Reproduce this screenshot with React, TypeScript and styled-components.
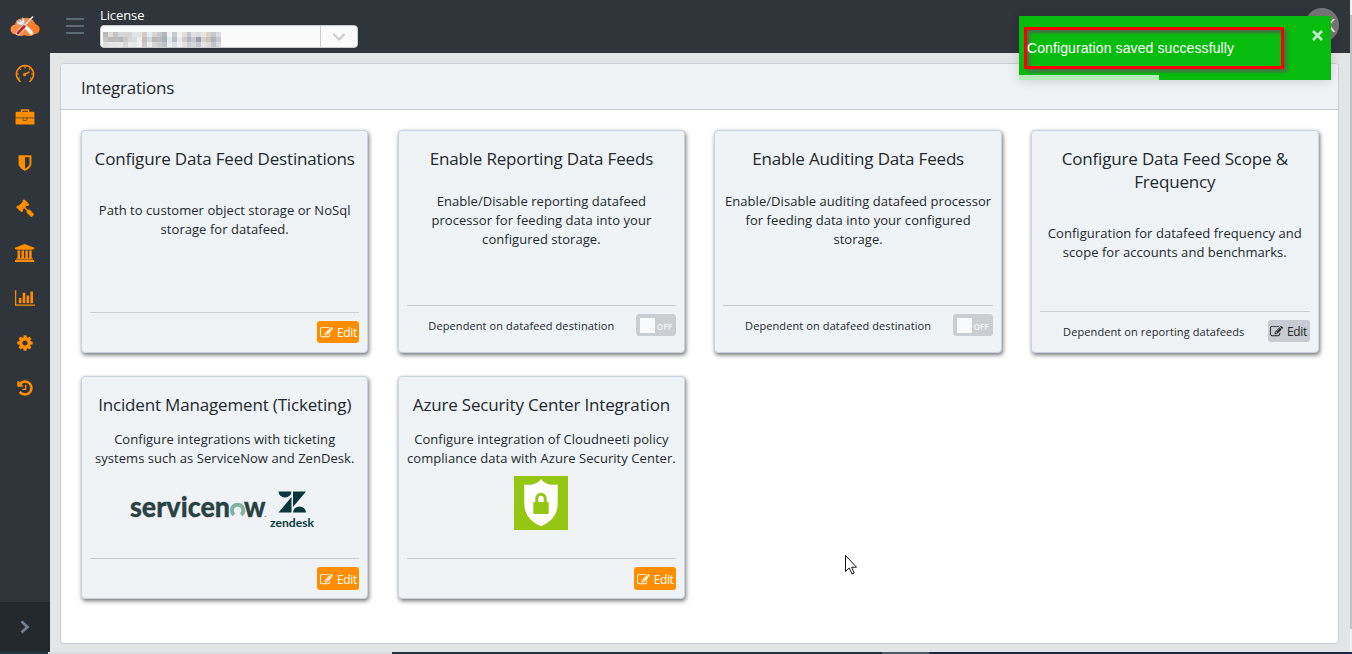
import React from "react";
import styled, { createGlobalStyle, css } from "styled-components";

const GlobalStyle = createGlobalStyle`
  *, *::before, *::after { box-sizing: border-box; }
  html, body, #root { height: 100%; }
  body {
    margin: 0;
    overflow: hidden;
    font-family: "Open Sans", "Noto Sans", sans-serif;
    font-size: 13px;
    color: #23282c;
    background: #e4e5e6;
  }
`;

const Shell = styled.div`
  position: relative;
  display: flex;
  flex-direction: column;
  height: 654px;
  width: 1352px;
  overflow: hidden;
`;

const Columns = styled.div`
  display: flex;
  height: 652px;
`;

const Sidebar = styled.nav`
  display: flex;
  flex-direction: column;
  width: 50px;
  background: #2f353a;
`;

const Brand = styled.div`
  display: flex;
  align-items: center;
  justify-content: center;
  height: 50px;
  padding-top: 2px;
`;

const NavItem = styled.a`
  display: flex;
  align-items: center;
  justify-content: center;
  height: 45px;
  color: #ff8d00;
  svg { display: block; }
`;

const Minimizer = styled.button`
  display: flex;
  align-items: center;
  justify-content: center;
  height: 50px;
  margin: auto 0 0;
  padding: 0;
  border: 0;
  background: #23282c;
`;

const Content = styled.div`
  display: flex;
  flex-direction: column;
  flex: 1;
`;

const TopBar = styled.header`
  display: flex;
  align-items: flex-start;
  height: 53px;
  background: #2f353a;
`;

const MenuButton = styled.div`
  display: flex;
  flex-direction: column;
  gap: 5px;
  width: 18px;
  margin: 18px 16px 0 16px;
`;

const MenuLine = styled.span`
  height: 2px;
  background: #5c6a76;
`;

const LicenseField = styled.div`
  display: flex;
  flex-direction: column;
  width: 258px;
`;

const LicenseLabel = styled.label`
  height: 25px;
  padding-top: 6px;
  line-height: 18px;
  letter-spacing: -0.1px;
  color: #fff;
`;

const Select = styled.div`
  display: flex;
  height: 23px;
  border: 1px solid #ccc;
  border-radius: 4px;
  background: #fbfbfb;
`;

const SelectValue = styled.div`
  display: grid;
  grid-template-columns: repeat(24, 1fr);
  grid-auto-rows: 5px;
  width: 118px;
  margin: 6px 0 0 2px;
`;

const Mosaic = styled.i<{ $tone: string }>`
  background: ${(p) => p.$tone};
`;

const SelectArrow = styled.div`
  display: flex;
  align-items: center;
  justify-content: center;
  width: 37px;
  margin-left: auto;
  border-left: 1px solid #ccc;
`;

const Avatar = styled.div`
  display: flex;
  align-items: center;
  justify-content: flex-end;
  width: 34px;
  height: 34px;
  margin: 8px 11px 0 auto;
  padding-right: 4px;
  border-radius: 50%;
  background: #777;
  color: #fff;
  font-size: 18px;
`;

const Panel = styled.section`
  flex: 1;
  margin: 10px 11px 8px 10px;
  border: 1px solid #c8ced3;
  border-radius: 4px;
  background: #fff;
  overflow: hidden;
`;

const PanelHeader = styled.h1`
  height: 46px;
  margin: 0;
  padding: 0 20px;
  border-bottom: 1px solid #c8ced3;
  background: #eff3f6;
  font-size: 17px;
  font-weight: 400;
  line-height: 47px;
  letter-spacing: -0.2px;
`;

const CardGrid = styled.div`
  display: grid;
  grid-template-columns: repeat(4, 1fr);
  gap: 23px 29.3px;
  padding: 20px 19.5px 0 20px;
`;

const Card = styled.article<{ $foot: number }>`
  display: flex;
  flex-direction: column;
  height: 223px;
  padding: 16px 8px ${(p) => p.$foot}px;
  border: 1px solid #c8d3de;
  border-radius: 4px;
  background: #eff3f6;
  box-shadow: 1px 2px 4px rgba(0, 0, 0, 0.55);
  text-align: center;
`;

const CardTitle = styled.h2`
  margin: 0;
  font-size: 17px;
  font-weight: 400;
  line-height: 23px;
  letter-spacing: -0.17px;
`;

const CardText = styled.p<{ $gap: number }>`
  margin: ${(p) => p.$gap}px 0 0;
  line-height: 19px;
  letter-spacing: 0.05px;
`;

const CardFooter = styled.footer`
  display: flex;
  align-items: center;
  justify-content: flex-end;
  margin-top: auto;
  padding-top: 8px;
  border-top: 1px solid #c8ced3;
`;

const Dependency = styled.span`
  flex: 1;
  height: 22px;
  font-size: 11px;
  letter-spacing: 0.1px;
  line-height: 24px;
`;

const EditButton = styled.button<{ $muted?: boolean; $tall?: boolean }>`
  display: flex;
  align-items: center;
  justify-content: center;
  gap: 4px;
  width: 42px;
  height: ${(p) => (p.$tall ? 23 : 22)}px;
  padding: ${(p) => (p.$tall ? 2 : 1)}px 0 0;
  border: 0;
  border-radius: 3px;
  background: #ff8d00;
  color: #fff;
  font: 12px "Open Sans", sans-serif;
  letter-spacing: -0.35px;
  ${(p) => p.$muted && css`
    background: #c8ccd2;
    color: #23282c;
  `}
`;

const Toggle = styled.span`
  display: flex;
  align-items: center;
  gap: 2px;
  width: 40px;
  height: 22px;
  padding: 0 3px;
  border: 1px solid #c8ced3;
  border-radius: 3px;
  background: #cbced1;
  color: #f2f4f6;
  font-size: 8px;
  font-weight: 600;
`;

const ToggleKnob = styled.i`
  width: 15px;
  height: 15px;
  background: #f8f9fb;
`;

const ToggleText = styled.span`
  padding-top: 2px;
`;

const Logos = styled.div<{ $top: number; $end?: number }>`
  display: flex;
  justify-content: center;
  margin-top: ${(p) => p.$top}px;
  padding-right: ${(p) => p.$end ?? 0}px;
  svg { display: block; }
`;

const ScrollTrack = styled.div`
  width: 2px;
  padding-top: 15px;
  background: #f1f1f1;
`;

const ScrollThumb = styled.div`
  height: 614px;
  background: #c1c1c1;
`;

const Taskbar = styled.div`
  display: flex;
  height: 2px;
  background: #1c2b3c;
`;

const TaskSegment = styled.span<{ $width: number; $tone: string }>`
  width: ${(p) => p.$width}px;
  background: ${(p) => p.$tone};
`;

const Toast = styled.div`
  position: absolute;
  top: 16px;
  left: 1019px;
  width: 312px;
  height: 64px;
  display: flex;
  flex-direction: column;
  background: #07bc0c;
  box-shadow: 0 1px 10px rgba(0, 0, 0, 0.1), 0 2px 15px rgba(0, 0, 0, 0.05);
`;

const ToastBody = styled.div`
  display: flex;
  justify-content: space-between;
  height: 59px;
  padding: 11px 7px 0 5px;
`;

const Highlight = styled.div`
  display: flex;
  align-items: center;
  width: 260px;
  height: 42px;
  border: 3px solid #fe0000;
  box-shadow: 3px 3px 3px rgba(90, 90, 90, 0.8), inset 3px 3px 3px rgba(90, 90, 90, 0.75);
  color: #fff;
  font: 14px "Liberation Sans", Arial, sans-serif;
  letter-spacing: 0.1px;
`;

const ToastClose = styled.svg`
  margin-top: 2px;
`;

const ToastProgress = styled.div`
  width: 140px;
  height: 5px;
  background: rgba(255, 255, 255, 0.7);
`;

const Cursor = styled.svg`
  position: absolute;
  left: 844px;
  top: 554px;
`;

const ICONS = {
  shield:
    "M1344 960v-640h-448v1137q119-63 213-137 235-184 235-360zm192-768v768q0 86-33.5 170.5t-83 150-118 127.5-126.5 103-121 77.5-89.5 49.5-42.5 20q-12 6-26 6t-26-6q-16-7-42.5-20t-89.5-49.5-121-77.5-126.5-103-118-127.5-83-150-33.5-170.5v-768q0-26 19-45t45-19h1152q26 0 45 19t19 45z",
  gavel:
    "M1771 1536q0 53-37 90l-107 108q-39 37-91 37-53 0-90-37l-363-364q-38-36-38-90 0-53 43-96l-256-256-126 126q-14 14-34 14t-34-14q2 2 12.5 12t12.5 13 10 11.5 10 13.5 6 13.5 5.5 16.5 1.5 18q0 38-28 68-3 3-16.5 18t-19 20.5-18.5 16.5-22 15.5-22 9-26 4.5q-40 0-68-28l-408-408q-28-28-28-68 0-13 4.5-26t9-22 15.5-22 16.5-18.5 20.5-19 18-16.5q30-28 68-28 10 0 18 1.5t16.5 5.5 13.5 6 13.5 10 11.5 10 13 12.5 12 12.5q-14-14-14-34t14-34l348-348q14-14 34-14t34 14q-2-2-12.5-12t-12.5-13-10-11.5-10-13.5-6-13.5-5.5-16.5-1.5-18q0-38 28-68 3-3 16.5-18t19-20.5 18.5-16.5 22-15.5 22-9 26-4.5q40 0 68 28l408 408q28 28 28 68 0 13-4.5 26t-9 22-15.5 22-16.5 18.5-20.5 19-18 16.5q-30 28-68 28-10 0-18-1.5t-16.5-5.5-13.5-6-13.5-10-11.5-10-13-12.5-12-12.5q14 14 14 34t-14 34l-126 126 256 256q43-43 96-43 52 0 91 37l363 363q37 39 37 91z",
  university:
    "M960 0l960 384v128h-128q0 26-20.5 45t-48.5 19h-1526q-28 0-48.5-19t-20.5-45h-128v-128zm-704 640h256v768h128v-768h256v768h128v-768h256v768h128v-768h256v768h59q28 0 48.5 19t20.5 45v64h-1664v-64q0-26 20.5-45t48.5-19h59v-768zm1595 960q28 0 48.5 19t20.5 45v128h-1920v-128q0-26 20.5-45t48.5-19h1782z",
  chart:
    "M640 896v512h-256v-512h256zm384-512v1024h-256v-1024h256zm1024 1152v128h-2048v-1536h128v1408h1920zm-640-896v768h-256v-768h256zm384-384v1152h-256v-1152h256z",
  cog:
    "M1152 896q0-106-75-181t-181-75-181 75-75 181 75 181 181 75 181-75 75-181zm512-109v222q0 12-8 23t-20 13l-185 28q-19 54-39 91 35 50 107 138 10 12 10 25t-9 23q-27 37-99 108t-94 71q-12 0-26-9l-138-108q-44 23-91 38-16 136-29 186-7 28-36 28h-222q-14 0-24.5-8.5t-11.5-21.5l-28-184q-49-16-90-37l-141 107q-10 9-25 9-14 0-25-11-126-114-165-168-7-10-7-23 0-12 8-23 15-21 51-66.5t54-70.5q-27-50-41-99l-183-27q-13-2-21-12.5t-8-23.5v-222q0-12 8-23t19-13l186-28q14-46 39-92-40-57-107-138-10-12-10-24 0-10 9-23 26-36 98.5-107.5t94.5-71.5q13 0 26 10l138 107q44-23 91-38 16-136 29-186 7-28 36-28h222q14 0 24.5 8.5t11.5 21.5l28 184q49 16 90 37l142-107q9-9 24-9 13 0 25 10 129 119 165 170 7 8 7 22 0 12-8 23-15 21-51 66.5t-54 70.5q26 50 41 98l183 28q13 2 21 12.5t8 23.5z",
  history:
    "M1664 896q0 156-61 298t-164 245-245 164-298 61q-172 0-327-72.5t-264-204.5q-7-10-6.5-22.5t8.5-20.5l137-138q10-9 25-9 16 2 23 12 73 95 179 147t225 52q104 0 198.5-40.5t163.5-109.5 109.5-163.5 40.5-198.5-40.5-198.5-109.5-163.5-163.5-109.5-198.5-40.5q-98 0-188 35.5t-160 101.5l137 138q31 30 14 69-17 40-59 40h-448q-26 0-45-19t-19-45v-448q0-42 40-59 39-17 69 14l130 129q107-101 244.5-156.5t284.5-55.5q156 0 298 61t245 164 164 245 61 298zm-640-288v448q0 14-9 23t-23 9h-320q-14 0-23-9t-9-23v-64q0-14 9-23t23-9h224v-352q0-14 9-23t23-9h64q14 0 23 9t9 23z",
  edit:
    "M888 1184l116-116-152-152-116 116v56h96v96h56zm440-720q-16-16-33 1l-350 350q-17 17-1 33t33-1l350-350q17-17 1-33zm80 594v190q0 119-84.5 203.5t-203.5 84.5h-832q-119 0-203.5-84.5t-84.5-203.5v-832q0-119 84.5-203.5t203.5-84.5h832q63 0 117 25 15 7 18 23 3 17-9 29l-49 49q-14 14-32 8-23-6-45-6h-832q-66 0-113 47t-47 113v832q0 66 47 113t113 47h832q66 0 113-47t47-113v-126q0-13 9-22l64-64q15-15 35-7t20 29zm-96-738l288 288-672 672h-288v-288zm444 132l-92 92-288-288 92-92q28-28 68-28t68 28l152 152q28 28 28 68t-28 68z",
};

function Glyph({ name, size = 18, box = 1792 }: { name: keyof typeof ICONS; size?: number; box?: number }) {
  return (
    <svg width={(size * box) / 1792} height={size} viewBox={`0 0 ${box} 1792`} fill="currentColor">
      <path d={ICONS[name]} />
    </svg>
  );
}

function GaugeIcon() {
  return (
    <svg width="20" height="22" viewBox="0 -2 20 22" fill="none" stroke="currentColor">
      <path d="M5.2 17.3A8.6 8.6 0 1 1 14.8 17.3" strokeWidth="1.5" strokeLinecap="round" />
      <path d="M10 2.2v2M4.4 4.4l1.3 1.3M15.6 4.4l-1.3 1.3M1.9 10h2M18.1 10h-2M3.3 14.6l1.5-.9M16.7 14.6l-1.5-.9" strokeWidth="1.2" />
      <path d="M9.6 10.6l5-3" strokeWidth="1.5" />
      <circle cx="9.6" cy="10.6" r="1.6" fill="currentColor" stroke="none" />
    </svg>
  );
}

function BriefcaseIcon() {
  return (
    <svg width="20" height="20" viewBox="0 0 20 20" fill="none">
      <path d="M6.5 4V2h7v2" stroke="currentColor" strokeWidth="1.4" />
      <rect x="0.6" y="3.8" width="18.8" height="12.8" rx="1.2" fill="currentColor" />
      <path d="M0.6 9.9h18.8M8.2 9.8v2.6h3.6V9.8" stroke="#2f353a" strokeWidth="0.9" strokeOpacity="0.75" />
    </svg>
  );
}

function BrandLogo() {
  return (
    <svg width="32" height="24" viewBox="0 0 32 24">
      <defs>
        <linearGradient id="cloud" x1="0" x2="1" y1="0" y2="0">
          <stop offset="0" stopColor="#ff9152" />
          <stop offset="1" stopColor="#f9791f" />
        </linearGradient>
      </defs>
      <path
        d="M7 20.5C3.600 20.500 1.500 18 1.500 15.300C1.500 12.500 3.500 10.600 6.200 10.500C6.800 6.500 9.500 4.500 13 4.500C17 3.200 22 3.500 24 6.500C25.500 8 26 9 26.500 10.300C29.500 11 31 13 30.700 15.500C30.300 18.500 28.500 20 25.500 20.200C22 22.500 18 22.500 15.500 21C12.500 22.500 9.500 22 7 20.500Z"
        fill="url(#cloud)"
      />
      <path d="M11.500 7.500L22 18.600" stroke="#d7dce6" strokeWidth="3" strokeLinecap="round" />
      <path d="M18 14.200L22.500 19" stroke="#f4f5f8" strokeWidth="3.600" strokeLinecap="round" />
      <path d="M24 2.500L15.500 11.500" stroke="#e4e7ec" strokeWidth="1.600" />
      <path d="M15.200 12.500L9 19" stroke="#f6e9e8" strokeWidth="4.600" strokeLinecap="round" />
      <path d="M15.200 12.500L9 19" stroke="#bd2a24" strokeWidth="3" strokeLinecap="round" />
      <path d="M13.500 3.400A4 4 0 1 1 7.900 6.400L11 8L13.200 6.300Z" fill="#e5e8ee" stroke="#8d96a5" strokeWidth="0.500" />
    </svg>
  );
}

function TicketingLogos() {
  return (
    <svg width="188" height="42" viewBox="0 0 188 42">
      <g fill="#2a4243" stroke="#2a4243" strokeWidth="0.300" fontFamily="Lato, sans-serif" fontWeight="900" fontSize="28">
        <text x="2" y="29" textLength="100" lengthAdjust="spacingAndGlyphs">servicen</text>
        <text x="116" y="29" textLength="21.500" lengthAdjust="spacingAndGlyphs">w</text>
      </g>
      <path d="M106 26.800A5.700 5.700 0 1 1 113.200 26.800" fill="none" stroke="#81b5a1" strokeWidth="4" />
      <path d="M136.500 28.500h2" stroke="#6f8284" strokeWidth="0.800" />
      <g fill="#08363c">
        <path d="M150.500 3.500h13a6.500 6 0 0 1-13 0z" />
        <path d="M163.500 9v15.500h-13z" />
        <path d="M165 3.500h13l-13 15.500z" />
        <path d="M165 24.500a6.500 6 0 0 1 13 0z" />
        <text x="142" y="38.500" fontFamily="Lato, sans-serif" fontWeight="700" fontSize="12" textLength="44" lengthAdjust="spacingAndGlyphs">zendesk</text>
      </g>
    </svg>
  );
}

function SecurityLogo() {
  return (
    <svg width="54" height="54" viewBox="0 0 54 54">
      <path d="M0 0h54v54H0z" fill="#95c614" />
      <path d="M27 3C30 7.500 36 9.500 43.700 8.500V28C43.700 38.500 37 46 27 50.300C17 46 10.300 38.500 10.300 28V8.500C18 9.500 24 7.500 27 3Z" fill="#fff" />
      <path d="M22.800 27V22.500a4.200 4.200 0 0 1 8.400 0V27" fill="none" stroke="#95c614" strokeWidth="3" />
      <rect x="19.300" y="26" width="15.400" height="12" rx="1" fill="#95c614" />
    </svg>
  );
}

const MOSAIC = [
  "#b9b9b6 #dcdcda #c3c3c3 #d3d8dc #d8d6d2 #d4d7da #e3e6e8 #e2e2e2 #d5cbc6 #e2ecf4 #d5d5d5 #c5c9cd #b0b6bf #f0f2f4 #c5c9d0 #f2f2f2 #e8dcd8 #bcc8d3 #e2e2e2 #dcdce0 #e4e4e2 #dfcfc7 #bcc9cf #dcdcdc",
  "#c6c6c4 #b9b9b8 #bcbcb8 #b3b8c0 #c9c7c3 #d8d8d8 #d9dce0 #eeeeee #c9bbb6 #ccd8e0 #bdb5b1 #bbbcc1 #a8b0ba #dfeaf0 #b9bfc9 #e8ecf0 #d5ccca #aeb7c4 #c7c7c7 #9c9fae #d4d2cf #cfc0b9 #a9b5bb #c6cbce",
  "#dededd #e5e5e5 #e4e4e4 #e8e8e8 #d6d6d6 #ececec #e8e8e8 #f2f2f2 #cfc9c6 #e8edf0 #d9d5d2 #cbced3 #bcc3ca #e9eef1 #dcdfe5 #eeeeee #e5e1e0 #c8ccd4 #d6d6d6 #c4c6cf #e4e4e4 #e3dad6 #bfc6cb #dadada",
].flatMap((row) => row.split(" "));

function Edit({ muted, tall }: { muted?: boolean; tall?: boolean }) {
  return (
    <EditButton $muted={muted} $tall={tall}>
      <Glyph name="edit" size={13} />
      Edit
    </EditButton>
  );
}

function OffToggle() {
  return (
    <Toggle>
      <ToggleKnob />
      <ToggleText>OFF</ToggleText>
    </Toggle>
  );
}

type Integration = {
  title: string;
  text: string;
  gap: number;
  foot: number;
  dependency?: string;
  art?: React.ReactNode;
  action: React.ReactNode;
};

const INTEGRATIONS: Integration[] = [
  {
    title: "Configure Data Feed Destinations",
    text: "Path to customer object storage or NoSql storage for datafeed.",
    gap: 31,
    foot: 9,
    action: <Edit />,
  },
  {
    title: "Enable Reporting Data Feeds",
    text: "Enable/Disable reporting datafeed processor for feeding data into your configured storage.",
    gap: 22,
    foot: 16,
    dependency: "Dependent on datafeed destination",
    action: <OffToggle />,
  },
  {
    title: "Enable Auditing Data Feeds",
    text: "Enable/Disable auditing datafeed processor for feeding data into your configured storage.",
    gap: 22,
    foot: 16,
    dependency: "Dependent on datafeed destination",
    action: <OffToggle />,
  },
  {
    title: "Configure Data Feed Scope & Frequency",
    text: "Configuration for datafeed frequency and scope for accounts and benchmarks.",
    gap: 31,
    foot: 10,
    dependency: "Dependent on reporting datafeeds",
    action: <Edit muted />,
  },
  {
    title: "Incident Management (Ticketing)",
    text: "Configure integrations with ticketing systems such as ServiceNow and ZenDesk.",
    gap: 14,
    foot: 8,
    art: <Logos $top={20} $end={6}><TicketingLogos /></Logos>,
    action: <Edit tall />,
  },
  {
    title: "Azure Security Center Integration",
    text: "Configure integration of Cloudneeti policy compliance data with Azure Security Center.",
    gap: 14,
    foot: 8,
    art: <Logos $top={8} $end={1}><SecurityLogo /></Logos>,
    action: <Edit tall />,
  },
];

export default function App() {
  return (
    <>
      <GlobalStyle />
      <Shell>
        <Columns>
          <Sidebar>
            <Brand><BrandLogo /></Brand>
            <NavItem><GaugeIcon /></NavItem>
            <NavItem><BriefcaseIcon /></NavItem>
            <NavItem><Glyph name="shield" /></NavItem>
            <NavItem><Glyph name="gavel" /></NavItem>
            <NavItem><Glyph name="university" box={1920} /></NavItem>
            <NavItem><Glyph name="chart" box={2048} /></NavItem>
            <NavItem><Glyph name="cog" /></NavItem>
            <NavItem><Glyph name="history" /></NavItem>
            <Minimizer>
              <svg width="12" height="16" viewBox="0 0 12 16" fill="none" stroke="#73818f" strokeWidth="2.800">
                <path d="M2.500 2.500L8.500 8L2.500 13.500" />
              </svg>
            </Minimizer>
          </Sidebar>
          <Content>
            <TopBar>
              <MenuButton>
                <MenuLine />
                <MenuLine />
                <MenuLine />
              </MenuButton>
              <LicenseField>
                <LicenseLabel>License</LicenseLabel>
                <Select>
                  <SelectValue>
                    {MOSAIC.map((tone, i) => <Mosaic key={i} $tone={tone} />)}
                  </SelectValue>
                  <SelectArrow>
                    <svg width="14" height="10" viewBox="0 0 14 10" fill="none" stroke="#ccc" strokeWidth="2.200">
                      <path d="M1.500 2L7 7.500L12.500 2" />
                    </svg>
                  </SelectArrow>
                </Select>
              </LicenseField>
              <Avatar>K</Avatar>
            </TopBar>
            <Panel>
              <PanelHeader>Integrations</PanelHeader>
              <CardGrid>
                {INTEGRATIONS.map((item) => (
                  <Card key={item.title} $foot={item.foot}>
                    <CardTitle>{item.title}</CardTitle>
                    <CardText $gap={item.gap}>{item.text}</CardText>
                    {item.art}
                    <CardFooter>
                      {item.dependency && <Dependency>{item.dependency}</Dependency>}
                      {item.action}
                    </CardFooter>
                  </Card>
                ))}
              </CardGrid>
            </Panel>
          </Content>
          <ScrollTrack><ScrollThumb /></ScrollTrack>
        </Columns>
        <Taskbar>
          <TaskSegment $width={48} $tone="#223a48" />
          <TaskSegment $width={344} $tone="#dcdcdc" />
          <TaskSegment $width={490} $tone="#1f3340" />
          <TaskSegment $width={47} $tone="#4c5966" />
          <TaskSegment $width={423} $tone="#1b2740" />
        </Taskbar>
        <Toast>
          <ToastBody>
            <Highlight>Configuration saved successfully</Highlight>
            <ToastClose width="13" height="13" viewBox="0 0 13 13" stroke="#c5eec6" strokeWidth="2.600">
              <path d="M2 2L11 11M11 2L2 11" />
            </ToastClose>
          </ToastBody>
          <ToastProgress />
        </Toast>
        <Cursor width="14" height="22" viewBox="0 0 14 22">
          <path d="M1.500 1.500V17.500L5.200 14L8 20L10.200 19L7.600 13.200H12.500Z" fill="#fff" stroke="#14141f" />
        </Cursor>
      </Shell>
    </>
  );
}
